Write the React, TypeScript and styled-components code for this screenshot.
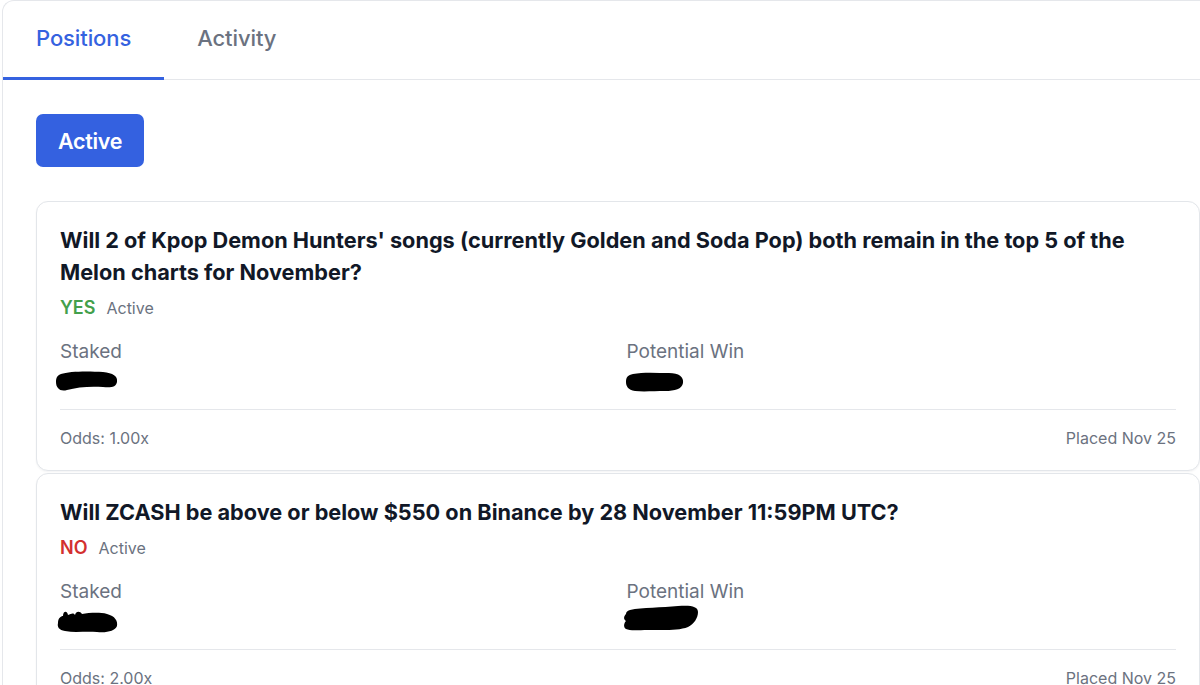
import React from "react";
import styled, { createGlobalStyle } from "styled-components";

const GlobalStyle = createGlobalStyle`
  html, body {
    margin: 0;
    padding: 0;
    background: #ffffff;
  }
  body {
    font-family: Inter, "Noto Sans", "Liberation Sans", sans-serif;
    color: #111827;
    -webkit-font-smoothing: antialiased;
  }
  #root {
    width: 1200px;
    height: 685px;
    overflow: hidden;
  }
`;

const Panel = styled.section`
  margin-left: 2px;
  width: 1240px;
  min-height: 800px;
  border: 1px solid #e5e7eb;
  border-right: none;
  border-top-left-radius: 12px;
  background: #fff;
`;

const TabBar = styled.nav`
  display: flex;
  height: 78px;
  border-bottom: 1px solid #e5e7eb;
`;

const Tab = styled.button<{ $active?: boolean }>`
  display: flex;
  align-items: center;
  padding: 0 33px 2px;
  margin-bottom: -1px;
  border: none;
  background: none;
  font-family: inherit;
  font-size: 22px;
  font-weight: 500;
  letter-spacing: -0.1px;
  color: ${(p) => (p.$active ? "#3562e0" : "#6b7280")};
  border-bottom: 3px solid ${(p) => (p.$active ? "#3562e0" : "transparent")};
  cursor: pointer;
`;

const Body = styled.div`
  padding: 34px 0 0 33px;
  width: 1164px;
`;

const FilterButton = styled.button`
  display: inline-flex;
  align-items: center;
  justify-content: center;
  height: 53px;
  padding: 0 22px;
  border: none;
  border-radius: 7px;
  background: #3461e0;
  color: #fff;
  font-family: inherit;
  font-size: 21.5px;
  font-weight: 600;
  letter-spacing: -0.3px;
  cursor: pointer;
`;

const CardList = styled.div`
  display: flex;
  flex-direction: column;
  gap: 2px;
  margin-top: 34px;
`;

const Card = styled.article`
  border: 1px solid #e3e6ea;
  border-radius: 12px;
  padding: 22px 23px 20px 23px;
  box-shadow: 0 1px 2px rgba(15, 23, 42, 0.05);
  background: #fff;
`;

const Title = styled.h3`
  margin: 0;
  font-size: 21.7px;
  line-height: 32px;
  font-weight: 700;
  color: #111827;
  letter-spacing: 0;
`;

const StatusRow = styled.div`
  display: flex;
  align-items: baseline;
  gap: 11px;
  margin-top: 8px;
  height: 24px;
  line-height: 24px;
`;

const Side = styled.span<{ $yes?: boolean }>`
  font-size: 18px;
  font-weight: 600;
  color: ${(p) => (p.$yes ? "#43a04b" : "#d3302f")};
`;

const StatusText = styled.span`
  font-size: 16px;
  color: #6b7280;
`;

const Stats = styled.div`
  display: grid;
  grid-template-columns: 1fr 1fr;
  column-gap: 17px;
  margin-top: 18px;
`;

const Stat = styled.div`
  display: flex;
  flex-direction: column;
`;

const StatLabel = styled.span`
  font-size: 19px;
  line-height: 28px;
  color: #6b7280;
`;

const StatValue = styled.span`
  display: flex;
  align-items: center;
  height: 28px;
  margin-left: -5px;
`;

const Footer = styled.div`
  display: flex;
  justify-content: space-between;
  align-items: center;
  margin-top: 15px;
  padding-top: 16px;
  border-top: 1px solid #e5e7eb;
  font-size: 16px;
  line-height: 24px;
  color: #6b7280;
`;

const blobs: Record<string, { w: number; h: number; d: string; dy: number; dx: number }> = {
  a: {
    w: 64,
    h: 22,
    dy: 1,
    dx: 0,
    d: "M6 4 C14 1 34 1 48 2 C58 3 63 6 62 12 C61 17 56 18 48 17 C36 16 22 17 12 20 C5 22 1 18 1 12 C1 7 3 5 6 4 Z",
  },
  b: {
    w: 60,
    h: 22,
    dy: 2,
    dx: 3,
    d: "M8 3 C18 1 32 2 44 2 C54 2 59 6 58 12 C57 18 50 20 40 20 C30 20 18 21 10 20 C3 19 1 15 1 11 C1 6 3 4 8 3 Z",
  },
  c: {
    w: 64,
    h: 28,
    dy: 0,
    dx: 0,
    d: "M3 17 C3 12 6 10 8 10 C8 5 12 4 13 9 C16 8 18 6 20 9 C21 5 25 5 27 8 C34 7 44 6 52 8 C60 10 63 15 62 20 C60 25 52 27 42 26 C30 25 20 27 10 25 C4 24 2 21 3 17 Z",
  },
  d: {
    w: 78,
    h: 28,
    dy: -2,
    dx: 0,
    d: "M8 6 C20 3 40 4 56 2 C68 1 76 2 76 8 C76 14 72 20 66 23 C56 27 40 26 26 26 C16 26 8 27 4 25 C1 23 2 19 4 17 C1 15 2 12 4 10 C4 8 5 7 8 6 Z",
  },
};

const Redaction: React.FC<{ shape: keyof typeof blobs }> = ({ shape }) => {
  const b = blobs[shape];
  return (
    <svg
      width={b.w}
      height={b.h}
      viewBox={`0 0 ${b.w} ${b.h}`}
      style={{ transform: `translate(${b.dx}px, ${b.dy}px)` }}
      aria-hidden
    >
      <path d={b.d} fill="#000" />
    </svg>
  );
};

type Position = {
  title: string;
  yes: boolean;
  staked: keyof typeof blobs;
  win: keyof typeof blobs;
  odds: string;
  placed: string;
};

const positions: Position[] = [
  {
    title:
      "Will 2 of Kpop Demon Hunters' songs (currently Golden and Soda Pop) both remain in the top 5 of the Melon charts for November?",
    yes: true,
    staked: "a",
    win: "b",
    odds: "1.00x",
    placed: "Nov 25",
  },
  {
    title: "Will ZCASH be above or below $550 on Binance by 28 November 11:59PM UTC?",
    yes: false,
    staked: "c",
    win: "d",
    odds: "2.00x",
    placed: "Nov 25",
  },
];

export default function App() {
  return (
    <>
      <GlobalStyle />
      <Panel>
        <TabBar>
          <Tab $active>Positions</Tab>
          <Tab>Activity</Tab>
        </TabBar>
        <Body>
          <FilterButton>Active</FilterButton>
          <CardList>
            {positions.map((p, i) => (
              <Card key={i}>
                <Title>{p.title}</Title>
                <StatusRow>
                  <Side $yes={p.yes}>{p.yes ? "YES" : "NO"}</Side>
                  <StatusText>Active</StatusText>
                </StatusRow>
                <Stats>
                  <Stat>
                    <StatLabel>Staked</StatLabel>
                    <StatValue>
                      <Redaction shape={p.staked} />
                    </StatValue>
                  </Stat>
                  <Stat>
                    <StatLabel>Potential Win</StatLabel>
                    <StatValue>
                      <Redaction shape={p.win} />
                    </StatValue>
                  </Stat>
                </Stats>
                <Footer>
                  <span>Odds: {p.odds}</span>
                  <span>Placed {p.placed}</span>
                </Footer>
              </Card>
            ))}
          </CardList>
        </Body>
      </Panel>
    </>
  );
}
